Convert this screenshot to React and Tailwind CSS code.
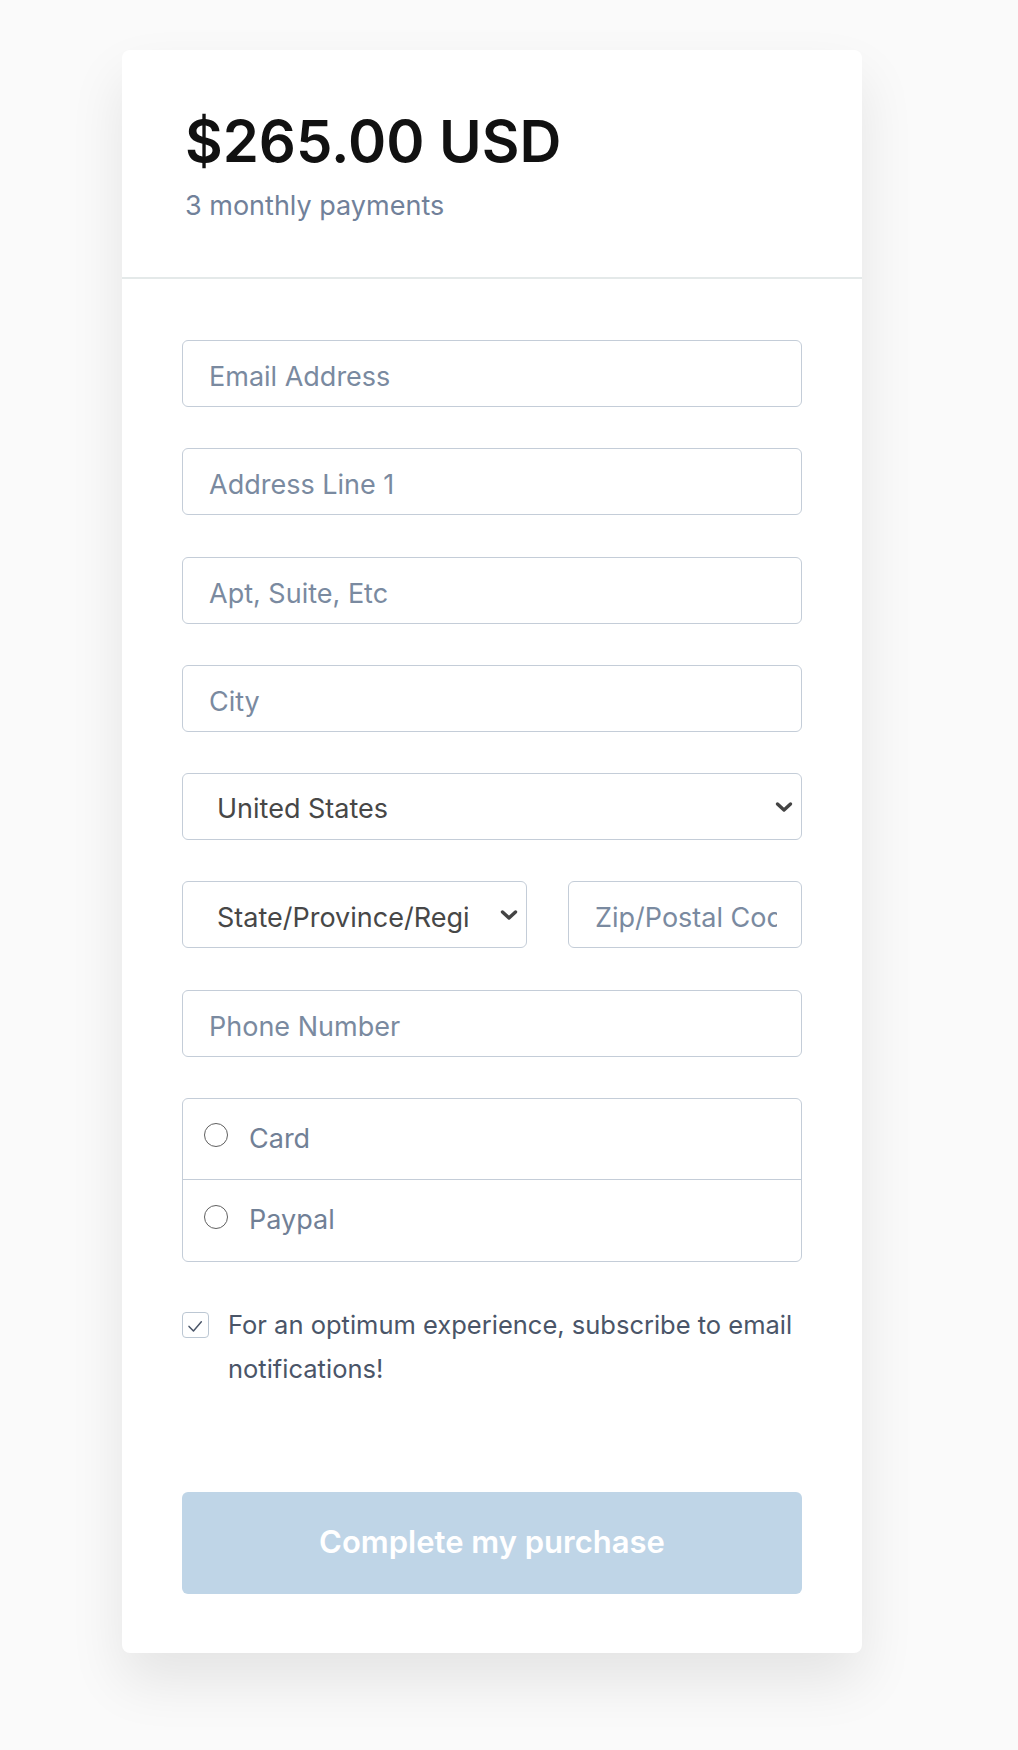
import { useState } from 'react';

const font = { fontFamily: 'Inter, "Noto Sans", sans-serif' };

function Chevron() {
  return (
    <svg
      width="18"
      height="11"
      viewBox="0 0 18 11"
      className="pointer-events-none absolute right-[9px] top-1/2 -translate-y-1/2"
    >
      <path d="M2.5 2.5 L9 8.5 L15.5 2.5" fill="none" stroke="#444" strokeWidth="3.4" strokeLinecap="round" strokeLinejoin="round" />
    </svg>
  );
}

function TextInput({ placeholder, className = '' }) {
  return (
    <input
      type="text"
      placeholder={placeholder}
      className={`h-[67px] w-full rounded-md border border-[#c4cdd8] bg-white pt-[6px] pl-[26px] pr-[24px] text-[27px] text-[#2d3748] placeholder:text-[#7a8aa0] outline-none ${className}`}
    />
  );
}

function Select({ value, options }) {
  return (
    <div className="relative h-[67px] w-full">
      <select
        defaultValue={value}
        className="h-full w-full appearance-none rounded-md border border-[#c4cdd8] bg-white pt-[6px] pl-[34px] pr-[58px] text-[27px] text-[#474747] outline-none"
      >
        {options.map((o) => (
          <option key={o}>{o}</option>
        ))}
      </select>
      <Chevron />
    </div>
  );
}

export default function App() {
  const [method, setMethod] = useState(null);
  const [subscribe, setSubscribe] = useState(true);

  return (
    <div className="min-h-[1750px] bg-[#fafafa] pl-[122px] pt-[50px]" style={font}>
      <div className="w-[740px] rounded-lg bg-white shadow-[0_28px_56px_rgba(0,0,0,0.09)]">
        {/* header */}
        <div className="border-b-2 border-[#e4e9e9] px-[63px] pt-[62px] pb-[58px]">
          <div className="text-[58px] font-semibold leading-none text-[#111]">$265.00 USD</div>
          <div className="mt-[22px] text-[27px] leading-none text-[#71819a]">3 monthly payments</div>
        </div>

        {/* form */}
        <div className="flex flex-col gap-[41.3px] px-[60px] pt-[61px] pb-[59px]">
          <TextInput placeholder="Email Address" />
          <TextInput placeholder="Address Line 1" />
          <TextInput placeholder="Apt, Suite, Etc" />
          <TextInput placeholder="City" />
          <Select value="United States" options={['United States', 'Canada', 'Mexico']} />
          <div className="flex gap-[41px]">
            <div className="w-[345px] shrink-0">
              <Select value="State/Province/Region" options={['State/Province/Region', 'California', 'New York']} />
            </div>
            <TextInput placeholder="Zip/Postal Code" />
          </div>
          <TextInput placeholder="Phone Number" />

          <div className="divide-y divide-[#c4cdd8] rounded-md border border-[#c4cdd8]">
            {['Card', 'Paypal'].map((m) => (
              <label key={m} className="flex h-[81px] cursor-pointer items-center pl-[21px]">
                <span
                  onClick={() => setMethod(m)}
                  className="mb-[8px] flex h-[24px] w-[24px] items-center justify-center rounded-full border-[1.5px] border-[#5f5f5f]"
                >
                  {method === m && <span className="h-[12px] w-[12px] rounded-full bg-[#4a5568]" />}
                </span>
                <span className="ml-[21px] text-[27px] text-[#718096]">{m}</span>
              </label>
            ))}
          </div>

          <div className="flex items-start">
            <button
              onClick={() => setSubscribe(!subscribe)}
              className="mt-[9px] flex h-[26px] w-[27px] shrink-0 items-center justify-center rounded-[4px] border-[1.5px] border-[#bcc7d3] bg-white"
            >
              {subscribe && (
                <svg width="27" height="26" viewBox="0 0 27 26">
                  <path d="M6.5 14.5 L11.3 19.5 L19.8 9.5" fill="none" stroke="#4a5568" strokeWidth="1.6" strokeLinecap="round" strokeLinejoin="round" />
                </svg>
              )}
            </button>
            <p className="ml-[19px] text-[25.5px] leading-[44px] text-[#4a5568]">
              For an optimum experience, subscribe to email notifications!
            </p>
          </div>

          <button className="mt-[59px] h-[102px] w-full rounded-md bg-[#bfd5e7] text-[31px] font-semibold text-white">
            Complete my purchase
          </button>
        </div>
      </div>
    </div>
  );
}
